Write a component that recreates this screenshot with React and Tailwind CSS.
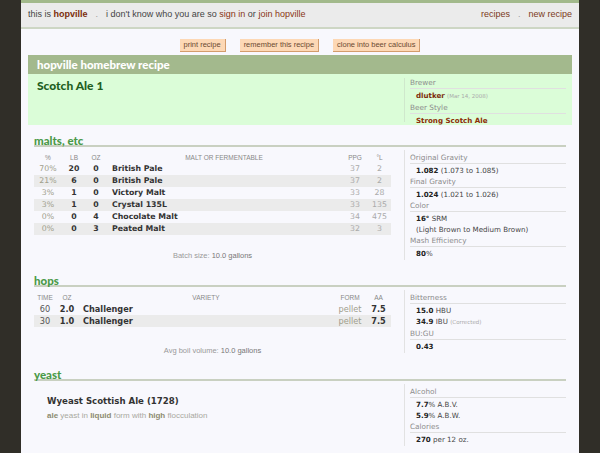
const verd = "font-['DejaVu_Sans',Verdana,sans-serif]";
const helv = "font-['Liberation_Sans',Arial,sans-serif]";
const fut = "font-['Lato',sans-serif]";

const malts = [
  { pct: '70%', lb: 20, oz: 0, name: 'British Pale', ppg: 37, l: 2 },
  { pct: '21%', lb: 6, oz: 0, name: 'British Pale', ppg: 37, l: 2 },
  { pct: '3%', lb: 1, oz: 0, name: 'Victory Malt', ppg: 33, l: 28 },
  { pct: '3%', lb: 1, oz: 0, name: 'Crystal 135L', ppg: 33, l: 135 },
  { pct: '0%', lb: 0, oz: 4, name: 'Chocolate Malt', ppg: 34, l: 475 },
  { pct: '0%', lb: 0, oz: 3, name: 'Peated Malt', ppg: 32, l: 3 },
];

const hops = [
  { time: 60, oz: '2.0', name: 'Challenger', form: 'pellet', aa: '7.5' },
  { time: 30, oz: '1.0', name: 'Challenger', form: 'pellet', aa: '7.5' },
];

function Stat({ label, children }) {
  return (
    <div>
      <div className="h-[11px] border-b border-[#e0e0e0] text-[7.3px] leading-[10px] text-[#8c8c8c]">{label}</div>
      <div className="pb-[1px] pl-[6px] pt-[1px] text-[7.1px] leading-[11px] text-[#444]">{children}</div>
    </div>
  );
}

function Side({ children }) {
  return (
    <div className={`ml-[13px] mt-[3px] w-[162px] self-start border-l border-[#e2e2e2] pl-[5px] pt-[3px] ${verd}`}>
      {children}
    </div>
  );
}

function Heading({ children, className = '' }) {
  return (
    <div className={`border-b-2 border-[#c9d0c1] text-[11.5px] leading-[8px] ${className}`}>
      <span className={`${fut} font-black text-[#4a9a48]`}>{children}</span>
    </div>
  );
}

const App = () => {
  return (
    <div className="flex min-h-screen justify-center bg-[#302e28]">
      <div className="w-[558px] bg-[#f8f8fd]">
        <div className="h-[3px] bg-[#a2b98b]"></div>

        {/* barra de navegacion */}
        <div className={`flex h-[24px] items-center justify-between bg-[#ebebeb] px-[7px] text-[9px] text-[#444] ${helv}`}>
          <div>
            this is <b className="text-[#7b2d0c]">hopville</b>
            <span className="mx-[8px] text-[#999]">.</span>
            i don't know who you are so <span className="text-[#8a3413]">sign in</span> or{' '}
            <span className="text-[#8a3413]">join hopville</span>
          </div>
          <div className="text-[#7b3a1a]">
            recipes<span className="mx-[8px] text-[#999]">.</span>new recipe
          </div>
        </div>
        <div className="h-[2px] bg-[#cdd6c4]"></div>

        <div className={`flex justify-center gap-[14px] pt-[10px] ${helv}`}>
          {['print recipe', 'remember this recipe', 'clone into beer calculus'].map((b) => (
            <button
              key={b}
              className="h-[13px] border-b border-r border-[#d39c6c] bg-[#fdd8b5] px-[4px] text-[7.5px] leading-[12px] text-[#6b4a32]"
            >
              {b}
            </button>
          ))}
        </div>

        {/* cabecera de la receta */}
        <div className="mx-[7px] mt-[3px]">
          <div className={`flex h-[19px] items-center bg-[#a3b98d] pl-[9px] text-[11.5px] font-black text-white ${fut}`}>
            hopville homebrew recipe
          </div>
          <div className="flex h-[51px] bg-[#dbfdd8]">
            <div className={`w-[376px] pl-[9px] pt-[5px] text-[12px] font-black leading-[14px] text-[#1f5f1f] ${fut}`}>
              Scotch Ale 1
            </div>
            <div className={`mt-[4px] h-[44px] w-[162px] border-l border-[#cfe8cc] pl-[5px] ${verd}`}>
              <Stat label="Brewer">
                <b className="text-[#7b2d0c]">dlutker</b>{' '}
                <span className="text-[5.5px] text-[#aaa]">(Mar 14, 2008)</span>
              </Stat>
              <Stat label="Beer Style">
                <b className="text-[#8b2b05]">Strong Scotch Ale</b>
              </Stat>
            </div>
          </div>
        </div>

        <div className="px-[13px]">
          {/* maltas */}
          <Heading className="mt-[12px]">malts, etc</Heading>
          <div className="flex">
            <div className="mt-[5px] w-[357px]">
              <div className={`flex h-[11px] items-center text-[6.5px] uppercase text-[#888] ${helv}`}>
                <span className="w-[28px] text-center">%</span>
                <span className="w-[24px] text-center">LB</span>
                <span className="w-[20px] text-center">OZ</span>
                <span className="w-[236px] text-center">Malt or Fermentable</span>
                <span className="w-[26px] text-center">PPG</span>
                <span className="w-[23px] text-center">°L</span>
              </div>
              {malts.map((m, i) => (
                <div
                  key={i}
                  className={`flex h-[12px] items-center text-[7.8px] ${verd} ${i % 2 ? 'bg-[#ebebeb]' : ''}`}
                >
                  <span className="w-[28px] text-center text-[#a09e8c]">{m.pct}</span>
                  <span className="w-[24px] text-center font-bold text-[#333]">{m.lb}</span>
                  <span className="w-[20px] text-center font-bold text-[#333]">{m.oz}</span>
                  <span className="w-[236px] pl-[6px] font-bold text-[#333]">{m.name}</span>
                  <span className="w-[26px] text-center text-[#aaa]">{m.ppg}</span>
                  <span className="w-[23px] text-center text-[#aaa]">{m.l}</span>
                </div>
              ))}
              <div className={`mt-[16px] text-center text-[7.5px] leading-[10px] text-[#999] ${helv}`}>
                Batch size: <span className="text-[#777]">10.0 gallons</span>
              </div>
            </div>
            <Side>
              <Stat label="Original Gravity">
                <b className="text-[#222]">1.082</b> (1.073 to 1.085)
              </Stat>
              <Stat label="Final Gravity">
                <b className="text-[#222]">1.024</b> (1.021 to 1.026)
              </Stat>
              <Stat label="Color">
                <b className="text-[#222]">16°</b> SRM
                <br />
                (Light Brown to Medium Brown)
              </Stat>
              <Stat label="Mash Efficiency">
                <b className="text-[#222]">80</b>%
              </Stat>
            </Side>
          </div>

          {/* lupulos */}
          <Heading className="mt-[16px]">hops</Heading>
          <div className="flex">
            <div className="mt-[5px] w-[357px]">
              <div className={`flex h-[11px] items-center text-[6.5px] uppercase text-[#888] ${helv}`}>
                <span className="w-[22px] text-center">Time</span>
                <span className="w-[22px] text-center">OZ</span>
                <span className="w-[256px] text-center">Variety</span>
                <span className="w-[32px] text-center">Form</span>
                <span className="w-[25px] text-center">AA</span>
              </div>
              {hops.map((h, i) => (
                <div
                  key={i}
                  className={`flex h-[12px] items-center text-[8.2px] ${verd} ${i % 2 ? 'bg-[#ebebeb]' : ''}`}
                >
                  <span className="w-[22px] text-center text-[#555]">{h.time}</span>
                  <span className="w-[22px] text-center font-bold text-[#333]">{h.oz}</span>
                  <span className="w-[256px] pl-[5px] font-bold text-[#333]">{h.name}</span>
                  <span className="w-[32px] text-center text-[#a09e8c]">{h.form}</span>
                  <span className="w-[25px] text-center font-bold text-[#333]">{h.aa}</span>
                </div>
              ))}
              <div className={`mt-[19px] text-center text-[7.5px] leading-[10px] text-[#999] ${helv}`}>
                Avg boil volume: <span className="text-[#777]">10.0 gallons</span>
              </div>
            </div>
            <Side>
              <Stat label="Bitterness">
                <b className="text-[#222]">15.0</b> HBU
                <br />
                <b className="text-[#222]">34.9</b> IBU <span className="text-[5.5px] text-[#aaa]">(Corrected)</span>
              </Stat>
              <Stat label="BU:GU">
                <b className="text-[#222]">0.43</b>
              </Stat>
            </Side>
          </div>

          {/* levadura */}
          <Heading className="mt-[15px]">yeast</Heading>
          <div className="flex">
            <div className="w-[357px] pl-[13px] pt-[14px]">
              <div className={`text-[8.6px] font-bold leading-[12px] text-[#333] ${verd}`}>Wyeast Scottish Ale (1728)</div>
              <div className={`mt-[4px] text-[8px] leading-[10px] text-[#a8a8a0] ${helv}`}>
                <b className="text-[#8c8a70]">ale</b> yeast in <b className="text-[#8c8a70]">liquid</b> form with{' '}
                <b className="text-[#8c8a70]">high</b> flocculation
              </div>
            </div>
            <Side>
              <Stat label="Alcohol">
                <b className="text-[#222]">7.7</b>% A.B.V.
                <br />
                <b className="text-[#222]">5.9</b>% A.B.W.
              </Stat>
              <Stat label="Calories">
                <b className="text-[#222]">270</b> per 12 oz.
              </Stat>
            </Side>
          </div>
        </div>
        <div className="mt-[7px] h-[2px] bg-[#cfcfcf]"></div>
      </div>
    </div>
  );
};

export default App;
